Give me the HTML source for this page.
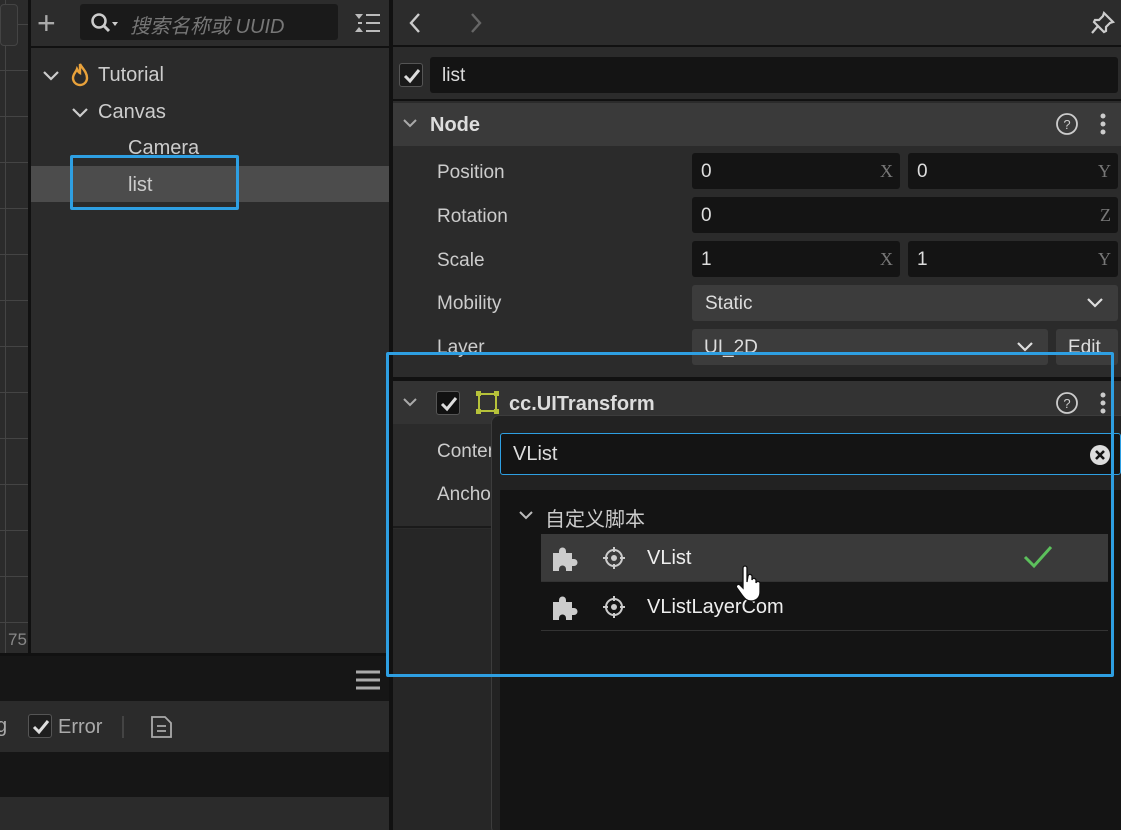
<!DOCTYPE html>
<html style="overflow:hidden;height:830px"><head><meta charset="utf-8"><style>
*{box-sizing:border-box;margin:0;padding:0}
body{width:1121px;height:830px;background:#2b2b2b;position:relative;overflow:hidden;font-family:"Liberation Sans","Noto Sans CJK SC",sans-serif;color:#ccc;font-size:19px}
.a{position:absolute}
.lbl{position:absolute;left:437px;color:#ccc;font-size:19px}
.inp{position:absolute;background:#141414;border-radius:3px;height:36px;color:#ddd;font-size:19px;padding:8px 9px}
.ax{position:absolute;right:7px;top:8px;font-family:"Liberation Serif",serif;color:#777;font-size:18px}
.cb{position:absolute;width:24px;height:24px;border:1px solid #555;border-radius:3px;background:#1a1a1a}
</style></head><body>
<!-- scene strip -->
<div class="a" style="left:0;top:0;width:28px;height:655px;background:#2b2b2b;
background-image:linear-gradient(#444 1px,transparent 1px),linear-gradient(90deg,#444 1px,transparent 1px);background-size:28px 46px;background-position:0 24px,5px 0"></div>
<div class="a" style="left:0;top:4px;width:18px;height:42px;border:1px solid #444;border-radius:4px;background:#2f2f2f"></div>
<div class="a" style="left:8px;top:630px;color:#888;font-size:17px">75</div>
<div class="a" style="left:28px;top:0;width:3px;height:655px;background:#111"></div>
<!-- hierarchy -->
<div class="a" style="left:31px;top:0;width:358px;height:48px;background:#2c2c2c;border-bottom:2px solid #111"></div>
<div class="a" style="left:37px;top:8px;font-size:32px;color:#aaa;line-height:30px">+</div>
<div class="a" style="left:80px;top:4px;width:258px;height:36px;background:#1a1a1a;border-radius:3px"></div>
<svg class="a" style="left:90px;top:12px" width="30" height="22"><circle cx="9" cy="9" r="6.5" stroke="#ccc" stroke-width="2.5" fill="none"/><path d="M14 14l5 5" stroke="#ccc" stroke-width="3"/><path d="M22 10h6l-3 4z" fill="#ccc"/></svg>
<div class="a" style="left:130px;top:10px;font-style:italic;color:#777;font-size:20px">搜索名称或 UUID</div>
<svg class="a" style="left:354px;top:12px" width="28" height="22"><path d="M1 2h8l-4 5z M1 20h8l-4-5z" fill="#bbb"/><path d="M12 3h14M12 11h14M12 19h14M4 11h4" stroke="#bbb" stroke-width="2"/></svg>
<div class="a" style="left:31px;top:50px;width:358px;height:603px;background:#2b2b2b"></div>
<svg class="a" style="left:42px;top:69px" width="18" height="14"><path d="M2 3l7 7 7-7" stroke="#ccc" stroke-width="2.2" fill="none"/></svg>
<svg class="a" style="left:69px;top:62px" width="22" height="26"><path d="M11 2c2 4 7 8 7 14a7 7 0 0 1-14 0c0-4 3-6 4-9 1 2 1 3 3 4 0-3 0-6 0-9z" stroke="#e9a23b" stroke-width="2.4" fill="none"/></svg>
<div class="a" style="left:98px;top:64px;font-size:20px;color:#ccc">Tutorial</div>
<svg class="a" style="left:71px;top:106px" width="18" height="14"><path d="M2 3l7 7 7-7" stroke="#ccc" stroke-width="2.2" fill="none"/></svg>
<div class="a" style="left:98px;top:101px;font-size:20px;color:#ccc">Canvas</div>
<div class="a" style="left:128px;top:137px;font-size:20px;color:#ccc">Camera</div>
<div class="a" style="left:31px;top:166px;width:358px;height:36px;background:#4c4c4c"></div>
<div class="a" style="left:128px;top:174px;font-size:20px;color:#ccc">list</div>
<div class="a" style="left:70px;top:155px;width:169px;height:55px;border:3px solid #2e9fe2;border-radius:2px"></div>
<!-- console -->
<div class="a" style="left:0;top:653px;width:389px;height:3px;background:#111"></div>
<div class="a" style="left:0;top:656px;width:389px;height:45px;background:#161616"></div>
<svg class="a" style="left:356px;top:670px" width="24" height="20"><path d="M0 2h24M0 10h24M0 18h24" stroke="#aaa" stroke-width="3"/></svg>
<div class="a" style="left:0;top:701px;width:389px;height:51px;background:#2b2b2b"></div>
<div class="a" style="left:-4px;top:715px;font-size:20px;color:#aaa">g</div>
<div class="cb" style="left:28px;top:714px;background:#1e1e1e"></div>
<svg class="a" style="left:31px;top:718px" width="20" height="18"><path d="M3 9l5 5 9-11" stroke="#ddd" stroke-width="3" fill="none"/></svg>
<div class="a" style="left:58px;top:716px;font-size:20px;color:#aaa">Error</div>
<div class="a" style="left:122px;top:716px;width:2px;height:22px;background:#444"></div>
<svg class="a" style="left:150px;top:715px" width="24" height="24"><path d="M2 2h13l6 6v14H2z" stroke="#aaa" stroke-width="1.8" fill="none"/><path d="M7 11h9M7 16h9" stroke="#aaa" stroke-width="1.8"/></svg>
<div class="a" style="left:0;top:752px;width:389px;height:45px;background:#161616"></div>
<!-- divider -->
<div class="a" style="left:389px;top:0;width:4px;height:830px;background:#111"></div>
<!-- inspector -->
<div class="a" style="left:393px;top:0;width:728px;height:47px;background:#2c2c2c;border-bottom:2px solid #111"></div>
<svg class="a" style="left:408px;top:12px" width="14" height="22"><path d="M11 2l-8 9 8 9" stroke="#ccc" stroke-width="2.4" fill="none"/></svg>
<svg class="a" style="left:469px;top:12px" width="14" height="22"><path d="M3 2l8 9-8 9" stroke="#666" stroke-width="2.4" fill="none"/></svg>
<svg class="a" style="left:1090px;top:10px" width="26" height="26"><path d="M14 3l9 9-3 1-4 4 0 4-2 1-10-10 1-2 4 0 4-4z M8 16l-6 7" stroke="#ccc" stroke-width="2.2" fill="none"/></svg>
<div class="a" style="left:393px;top:49px;width:728px;height:52px;background:#2b2b2b;border-bottom:2px solid #111"></div>
<div class="cb" style="left:399px;top:63px"></div>
<svg class="a" style="left:402px;top:67px" width="20" height="18"><path d="M3 9l5 5 9-11" stroke="#ddd" stroke-width="3" fill="none"/></svg>
<div class="inp" style="left:430px;top:57px;width:688px;height:36px;padding-left:12px">list</div>
<div class="a" style="left:393px;top:103px;width:728px;height:43px;background:#3a3a3a"></div>
<svg class="a" style="left:402px;top:118px" width="16" height="12"><path d="M2 2l6 6 6-6" stroke="#aaa" stroke-width="2" fill="none"/></svg>
<div class="a" style="left:430px;top:114px;font-weight:bold;font-size:20px;color:#ddd">Node</div>
<svg class="a" style="left:1055px;top:112px" width="24" height="24"><circle cx="12" cy="12" r="10" stroke="#ccc" stroke-width="1.8" fill="none"/><text x="12" y="17" text-anchor="middle" font-size="13" fill="#ccc" font-family="Liberation Sans">?</text></svg>
<svg class="a" style="left:1098px;top:112px" width="10" height="24"><circle cx="5" cy="4" r="2.5" fill="#ccc"/><circle cx="5" cy="12" r="2.5" fill="#ccc"/><circle cx="5" cy="20" r="2.5" fill="#ccc"/></svg>
<div class="lbl" style="top:162px">Position</div>
<div class="inp" style="left:692px;top:153px;width:208px">0<span class="ax">X</span></div>
<div class="inp" style="left:908px;top:153px;width:210px">0<span class="ax">Y</span></div>
<div class="lbl" style="top:206px">Rotation</div>
<div class="inp" style="left:692px;top:197px;width:426px">0<span class="ax">Z</span></div>
<div class="lbl" style="top:250px">Scale</div>
<div class="inp" style="left:692px;top:241px;width:208px">1<span class="ax">X</span></div>
<div class="inp" style="left:908px;top:241px;width:210px">1<span class="ax">Y</span></div>
<div class="lbl" style="top:293px">Mobility</div>
<div class="inp" style="left:692px;top:285px;width:426px;background:#3c3c3c;padding-left:13px">Static</div>
<svg class="a" style="left:1086px;top:297px" width="18" height="12"><path d="M2 2l7 7 7-7" stroke="#ddd" stroke-width="2.2" fill="none"/></svg>
<div class="lbl" style="top:337px">Layer</div>
<div class="inp" style="left:692px;top:329px;width:356px;background:#3c3c3c;padding-left:12px">UI_2D</div>
<svg class="a" style="left:1016px;top:341px" width="18" height="12"><path d="M2 2l7 7 7-7" stroke="#ddd" stroke-width="2.2" fill="none"/></svg>
<div class="inp" style="left:1056px;top:329px;width:62px;background:#3c3c3c;padding-left:12px">Edit</div>
<div class="a" style="left:393px;top:377px;width:728px;height:4px;background:#111"></div>
<div class="a" style="left:393px;top:381px;width:728px;height:43px;background:#333"></div>
<svg class="a" style="left:402px;top:397px" width="16" height="12"><path d="M2 2l6 6 6-6" stroke="#aaa" stroke-width="2" fill="none"/></svg>
<div class="cb" style="left:436px;top:391px;background:#111"></div>
<svg class="a" style="left:439px;top:395px" width="20" height="18"><path d="M3 9l5 5 9-11" stroke="#ddd" stroke-width="3" fill="none"/></svg>
<svg class="a" style="left:476px;top:391px" width="24" height="24"><rect x="3" y="3" width="17" height="17" stroke="#b6c23a" stroke-width="2" fill="none"/><rect x="0" y="0" width="5" height="5" fill="#b6c23a"/><rect x="18" y="0" width="5" height="5" fill="#b6c23a"/><rect x="0" y="18" width="5" height="5" fill="#b6c23a"/><rect x="18" y="18" width="5" height="5" fill="#b6c23a"/></svg>
<div class="a" style="left:509px;top:393px;font-weight:bold;font-size:20px;color:#ddd">cc.UITransform</div>
<svg class="a" style="left:1055px;top:391px" width="24" height="24"><circle cx="12" cy="12" r="10" stroke="#ccc" stroke-width="1.8" fill="none"/><text x="12" y="17" text-anchor="middle" font-size="13" fill="#ccc" font-family="Liberation Sans">?</text></svg>
<svg class="a" style="left:1098px;top:391px" width="10" height="24"><circle cx="5" cy="4" r="2.5" fill="#ccc"/><circle cx="5" cy="12" r="2.5" fill="#ccc"/><circle cx="5" cy="20" r="2.5" fill="#ccc"/></svg>
<div class="a" style="left:393px;top:424px;width:728px;height:104px;background:#2b2b2b;border-bottom:2px solid #1a1a1a"></div>
<div class="lbl" style="top:441px">Content</div>
<div class="lbl" style="top:484px">Anchor</div>
<div class="a" style="left:393px;top:529px;width:728px;height:301px;background:#262626"></div>
<!-- popup -->
<div class="a" style="left:491px;top:415px;width:640px;height:420px;background:#222;border:1px solid #3c3c3c;border-radius:8px"></div>
<div class="a" style="left:500px;top:433px;width:621px;height:42px;background:#141414;border:1px solid #2e9fe2;border-radius:3px;padding:9px 12px;font-size:20px;color:#ddd">VList</div>
<svg class="a" style="left:1089px;top:444px" width="22" height="22"><circle cx="11" cy="11" r="10" fill="#ddd"/><path d="M7 7l8 8M15 7l-8 8" stroke="#141414" stroke-width="2.6"/></svg>
<div class="a" style="left:500px;top:490px;width:621px;height:340px;background:#141414"></div>
<svg class="a" style="left:518px;top:510px" width="16" height="12"><path d="M2 2l6 6 6-6" stroke="#bbb" stroke-width="2" fill="none"/></svg>
<div class="a" style="left:545px;top:503px;font-size:20px;color:#ccc">自定义脚本</div>
<div class="a" style="left:541px;top:534px;width:567px;height:47px;background:#3a3a3a"></div>
<div class="a" style="left:541px;top:581px;width:567px;height:1px;background:#333"></div>
<div class="a" style="left:541px;top:630px;width:567px;height:1px;background:#333"></div>
<svg class="a" style="left:551px;top:544px" width="28" height="28"><path d="M2 9h6V7a3.5 3.5 0 1 1 7 0v2h6v6h2a3.5 3.5 0 1 1 0 7h-2v5h-6v-2a3.5 3.5 0 1 0-7 0v2H2z" fill="#ccc"/></svg>
<svg class="a" style="left:551px;top:593px" width="28" height="28"><path d="M2 9h6V7a3.5 3.5 0 1 1 7 0v2h6v6h2a3.5 3.5 0 1 1 0 7h-2v5h-6v-2a3.5 3.5 0 1 0-7 0v2H2z" fill="#ccc"/></svg>
<svg class="a" style="left:602px;top:546px" width="24" height="24"><circle cx="12" cy="12" r="8" stroke="#ccc" stroke-width="2" fill="none"/><circle cx="12" cy="12" r="3" fill="#ccc"/><path d="M12 1v5M12 18v5M1 12h5M18 12h5" stroke="#ccc" stroke-width="2"/></svg>
<svg class="a" style="left:602px;top:595px" width="24" height="24"><circle cx="12" cy="12" r="8" stroke="#ccc" stroke-width="2" fill="none"/><circle cx="12" cy="12" r="3" fill="#ccc"/><path d="M12 1v5M12 18v5M1 12h5M18 12h5" stroke="#ccc" stroke-width="2"/></svg>
<div class="a" style="left:647px;top:547px;font-size:20px;color:#eee">VList</div>
<div class="a" style="left:647px;top:596px;font-size:20px;color:#eee">VListLayerCom</div>
<svg class="a" style="left:1022px;top:544px" width="32" height="26"><path d="M3 13l9 9 17-19" stroke="#5cc05c" stroke-width="3" fill="none"/></svg>
<svg class="a" style="left:736px;top:565px" width="28" height="40"><path d="M7 3a2 2 0 0 1 4 0v14l1-6a2 2 0 0 1 4 1v3a2 2 0 0 1 4 1v2a2 2 0 0 1 4 1v8c0 6-4 9-9 9-4 0-6-2-9-6l-5-7a2 2 0 0 1 3-3l3 3z" fill="#fff" stroke="#111" stroke-width="1.3"/></svg>
<!-- highlight -->
<div class="a" style="left:386px;top:352px;width:728px;height:325px;border:3px solid #2e9fe2;border-radius:2px"></div>
</body></html>
